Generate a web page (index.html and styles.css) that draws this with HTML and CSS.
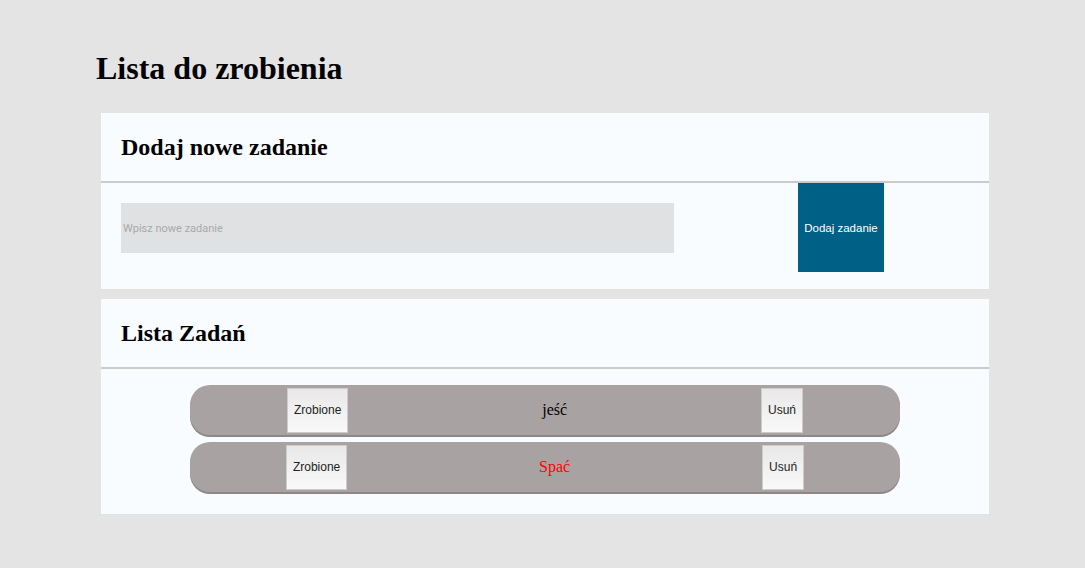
FILE: index.html
```html
<!DOCTYPE html>
<html lang="pl">
<head>
<meta charset="utf-8">
<title>Lista do zrobienia</title>
<link rel="stylesheet" href="styles.css">
</head>
<body>
<div class="page">
  <h1 class="title">Lista do zrobienia</h1>
  <section class="card">
    <div class="card-head"><h2>Dodaj nowe zadanie</h2></div>
    <div class="card-body add-body">
      <input class="task-input" type="text" placeholder="Wpisz nowe zadanie">
      <button class="add-btn" type="button">Dodaj zadanie</button>
    </div>
  </section>
  <section class="card">
    <div class="card-head"><h2>Lista Zadań</h2></div>
    <div class="card-body list-body">
      <div class="task">
        <button class="task-btn" type="button">Zrobione</button>
        <span class="task-text">jeść</span>
        <button class="task-btn" type="button">Usuń</button>
      </div>
      <div class="task">
        <button class="task-btn" type="button">Zrobione</button>
        <span class="task-text red">Spać</span>
        <button class="task-btn" type="button">Usuń</button>
      </div>
    </div>
  </section>
</div>
</body>
</html>
```

FILE: styles.css
```css
* { box-sizing: border-box; }
html, body { margin: 0; padding: 0; }
body {
  background: #e4e4e4;
  font-family: "Liberation Serif", "Times New Roman", serif;
  color: #000;
}
.page {
  padding: 50px 96px 0 96px;
}
.title {
  margin: 0 0 26px 0;
  font-size: 32px;
  font-weight: bold;
  line-height: normal;
}
.card {
  margin: 0 0 10px 5px;
  background: #f8fcff;
  box-shadow: 0 1px 0 #dfe1e3;
}
.card-head {
  height: 70px;
  display: flex;
  align-items: center;
  padding: 0 20px;
  border-bottom: 2px solid #cbcbcb;
}
.card-head h2 {
  margin: 0;
  font-size: 24px;
  font-weight: bold;
  line-height: normal;
}
.add-body {
  height: 106px;
  display: flex;
  align-items: flex-start;
  padding: 0 105px 0 20px;
}
.task-input {
  margin-top: 20px;
  width: 553px;
  height: 50px;
  border: none;
  outline: none;
  background: #e0e1e3;
  padding: 0 2px;
  font-family: Roboto, "Liberation Sans", Arial, sans-serif;
  font-size: 11px;
  color: #555;
}
.task-input::placeholder { color: #a9a9a9; }
.add-btn {
  margin-left: auto;
  width: 86px;
  height: 89px;
  border: none;
  background: #006085;
  color: #fff;
  font-family: "Liberation Sans", Arial, sans-serif;
  font-size: 11.5px;
  padding: 0;
}
.list-body {
  padding: 16px 0 15px 0;
}
.task {
  width: 710px;
  height: 50px;
  margin: 0 auto 7px auto;
  display: flex;
  align-items: center;
  justify-content: space-around;
  background: #a8a3a2;
  border-radius: 20px;
  box-shadow: 0 2px 0 #8d8887;
}
.task-btn {
  height: 45px;
  padding: 0 6px;
  border: 1px solid #cfcbca;
  background: linear-gradient(#e8e8e8, #f9f9f9);
  color: #222;
  font-family: "Liberation Sans", Arial, sans-serif;
  font-size: 12px;
}
.task-text {
  font-size: 16px;
}
.red { color: #ff0000; }
```
